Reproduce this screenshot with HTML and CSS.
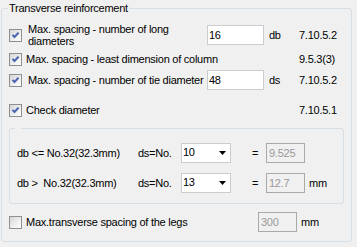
FILE: index.html
```html
<!DOCTYPE html>
<html>
<head>
<meta charset="utf-8">
<link rel="stylesheet" href="styles.css">
</head>
<body>
<fieldset class="group">
  <legend class="group-title">Transverse reinforcement</legend>

  <div class="row">
    <span class="cb"><svg class="tick" width="11" height="11" viewBox="0 0 11 11"><path d="M2.5 4.8 L4.5 7 L8.6 2.6" fill="none" stroke="#4a62b2" stroke-width="2"/></svg></span>
    <span class="label label-indent">Max. spacing - number of long<br>diameters</span>
    <span class="edit">16</span>
    <span class="unit">db</span>
    <span class="clause">7.10.5.2</span>
  </div>

  <div class="row row-2">
    <span class="cb"><svg class="tick" width="11" height="11" viewBox="0 0 11 11"><path d="M2.5 4.8 L4.5 7 L8.6 2.6" fill="none" stroke="#4a62b2" stroke-width="2"/></svg></span>
    <span class="label label-wide">Max. spacing - least dimension of column</span>
    <span class="clause">9.5.3(3)</span>
  </div>

  <div class="row row-3">
    <span class="cb"><svg class="tick" width="11" height="11" viewBox="0 0 11 11"><path d="M2.5 4.8 L4.5 7 L8.6 2.6" fill="none" stroke="#4a62b2" stroke-width="2"/></svg></span>
    <span class="label label-indent">Max. spacing - number of tie diameter</span>
    <span class="edit">48</span>
    <span class="unit">ds</span>
    <span class="clause">7.10.5.2</span>
  </div>

  <div class="row row-4">
    <span class="cb"><svg class="tick" width="11" height="11" viewBox="0 0 11 11"><path d="M2.5 4.8 L4.5 7 L8.6 2.6" fill="none" stroke="#4a62b2" stroke-width="2"/></svg></span>
    <span class="label label-wide">Check diameter</span>
    <span class="clause">7.10.5.1</span>
  </div>

  <fieldset class="sub">
    <legend class="sub-title"></legend>
    <div class="subrow">
      <span class="sublabel">db &lt;= No.32(32.3mm)</span>
      <span class="ds">ds=No.</span>
      <span class="combo"><span>10</span><svg width="7" height="4" viewBox="0 0 7 4"><path d="M0 0 H7 L3.5 4 Z" fill="#000"/></svg></span>
      <span class="eq">=</span>
      <span class="edit edit-dis">9.525</span>
    </div>
    <div class="subrow subrow-2">
      <span class="sublabel">db &gt;&nbsp; No.32(32.3mm)</span>
      <span class="ds">ds=No.</span>
      <span class="combo"><span>13</span><svg width="7" height="4" viewBox="0 0 7 4"><path d="M0 0 H7 L3.5 4 Z" fill="#000"/></svg></span>
      <span class="eq">=</span>
      <span class="edit edit-dis">12.7</span>
      <span class="subunit">mm</span>
    </div>
  </fieldset>

  <div class="row row-last">
    <span class="cb"></span>
    <span class="label">Max.transverse spacing of the legs</span>
    <span class="edit edit-dis">300</span>
    <span class="lastunit">mm</span>
  </div>
</fieldset>
</body>
</html>
```

FILE: styles.css
```css
html, body {
  margin: 0;
  padding: 0;
  background: #f0f0f0;
}

body {
  width: 357px;
  height: 247px;
  overflow: hidden;
  font-family: "Liberation Sans", Arial, sans-serif;
  font-size: 11px;
  letter-spacing: -0.25px;
  color: #000;
}

.group {
  box-sizing: border-box;
  width: 351px;
  margin: 1px 0 0 1px;
  padding: 8px 0 9px 6px;
  border: 1px solid #d5dfe5;
  border-radius: 3px;
  min-width: 0;
}

.group-title {
  padding: 0 1px;
  line-height: 14px;
}

.row {
  display: grid;
  grid-template-columns: 13px 185px 57px 35px auto;
  align-items: center;
  height: 20px;
  padding-left: 1px;
  line-height: 13px;
}

.row-2 { margin-top: 6px; }
.row-3 { margin-top: 1px; }
.row-4 { margin-top: 10px; }

.row-last {
  grid-template-columns: 13px 236px 39px auto;
  margin-top: 8px;
}

.cb {
  box-sizing: border-box;
  width: 13px;
  height: 13px;
  border: 1px solid #8e8f8f;
  background: linear-gradient(135deg, #d6d6d6 0%, #f4f4f4 70%, #ffffff 100%);
  display: flex;
}

.tick { display: block; }

.label {
  padding-left: 4px;
  white-space: nowrap;
}

.label-indent {
  padding-left: 6px;
  line-height: 12px;
}

.label-wide {
  grid-column: 2 / 5;
}

.edit {
  box-sizing: border-box;
  height: 20px;
  line-height: 18px;
  padding-left: 1px;
  border: 1px solid #c9ccd1;
  background: #fff;
}

.edit-dis {
  border-color: #a9a9a9;
  background: #f0f0f0;
  color: #9a9a9a;
  padding-left: 2px;
}

.unit { padding-left: 5px; }

.clause { grid-column: 5; }

.lastunit { padding-left: 4px; }

.sub {
  box-sizing: border-box;
  width: 335px;
  margin: 8px 0 0 1px;
  padding: 14px 0 10px 7px;
  border: 1px solid #d5dfe5;
  border-radius: 3px;
  min-width: 0;
}

.sub-title {
  padding: 0 3px;
  margin-left: -2px;
  line-height: 0;
  height: 0;
}

.subrow {
  display: grid;
  grid-template-columns: 121px 43px 50px 35px 39px auto;
  align-items: center;
  height: 20px;
  line-height: 13px;
}

.subrow-2 { margin-top: 10px; }

.sublabel { white-space: nowrap; }

.combo {
  box-sizing: border-box;
  height: 20px;
  border: 1px solid #c9ccd1;
  background: #fff;
  display: flex;
  align-items: center;
  justify-content: space-between;
  padding: 0 4px 1px 1px;
}

.combo svg { display: block; margin-top: 1px; }

.eq { padding-left: 21px; }

.subunit { padding-left: 4px; }
```
